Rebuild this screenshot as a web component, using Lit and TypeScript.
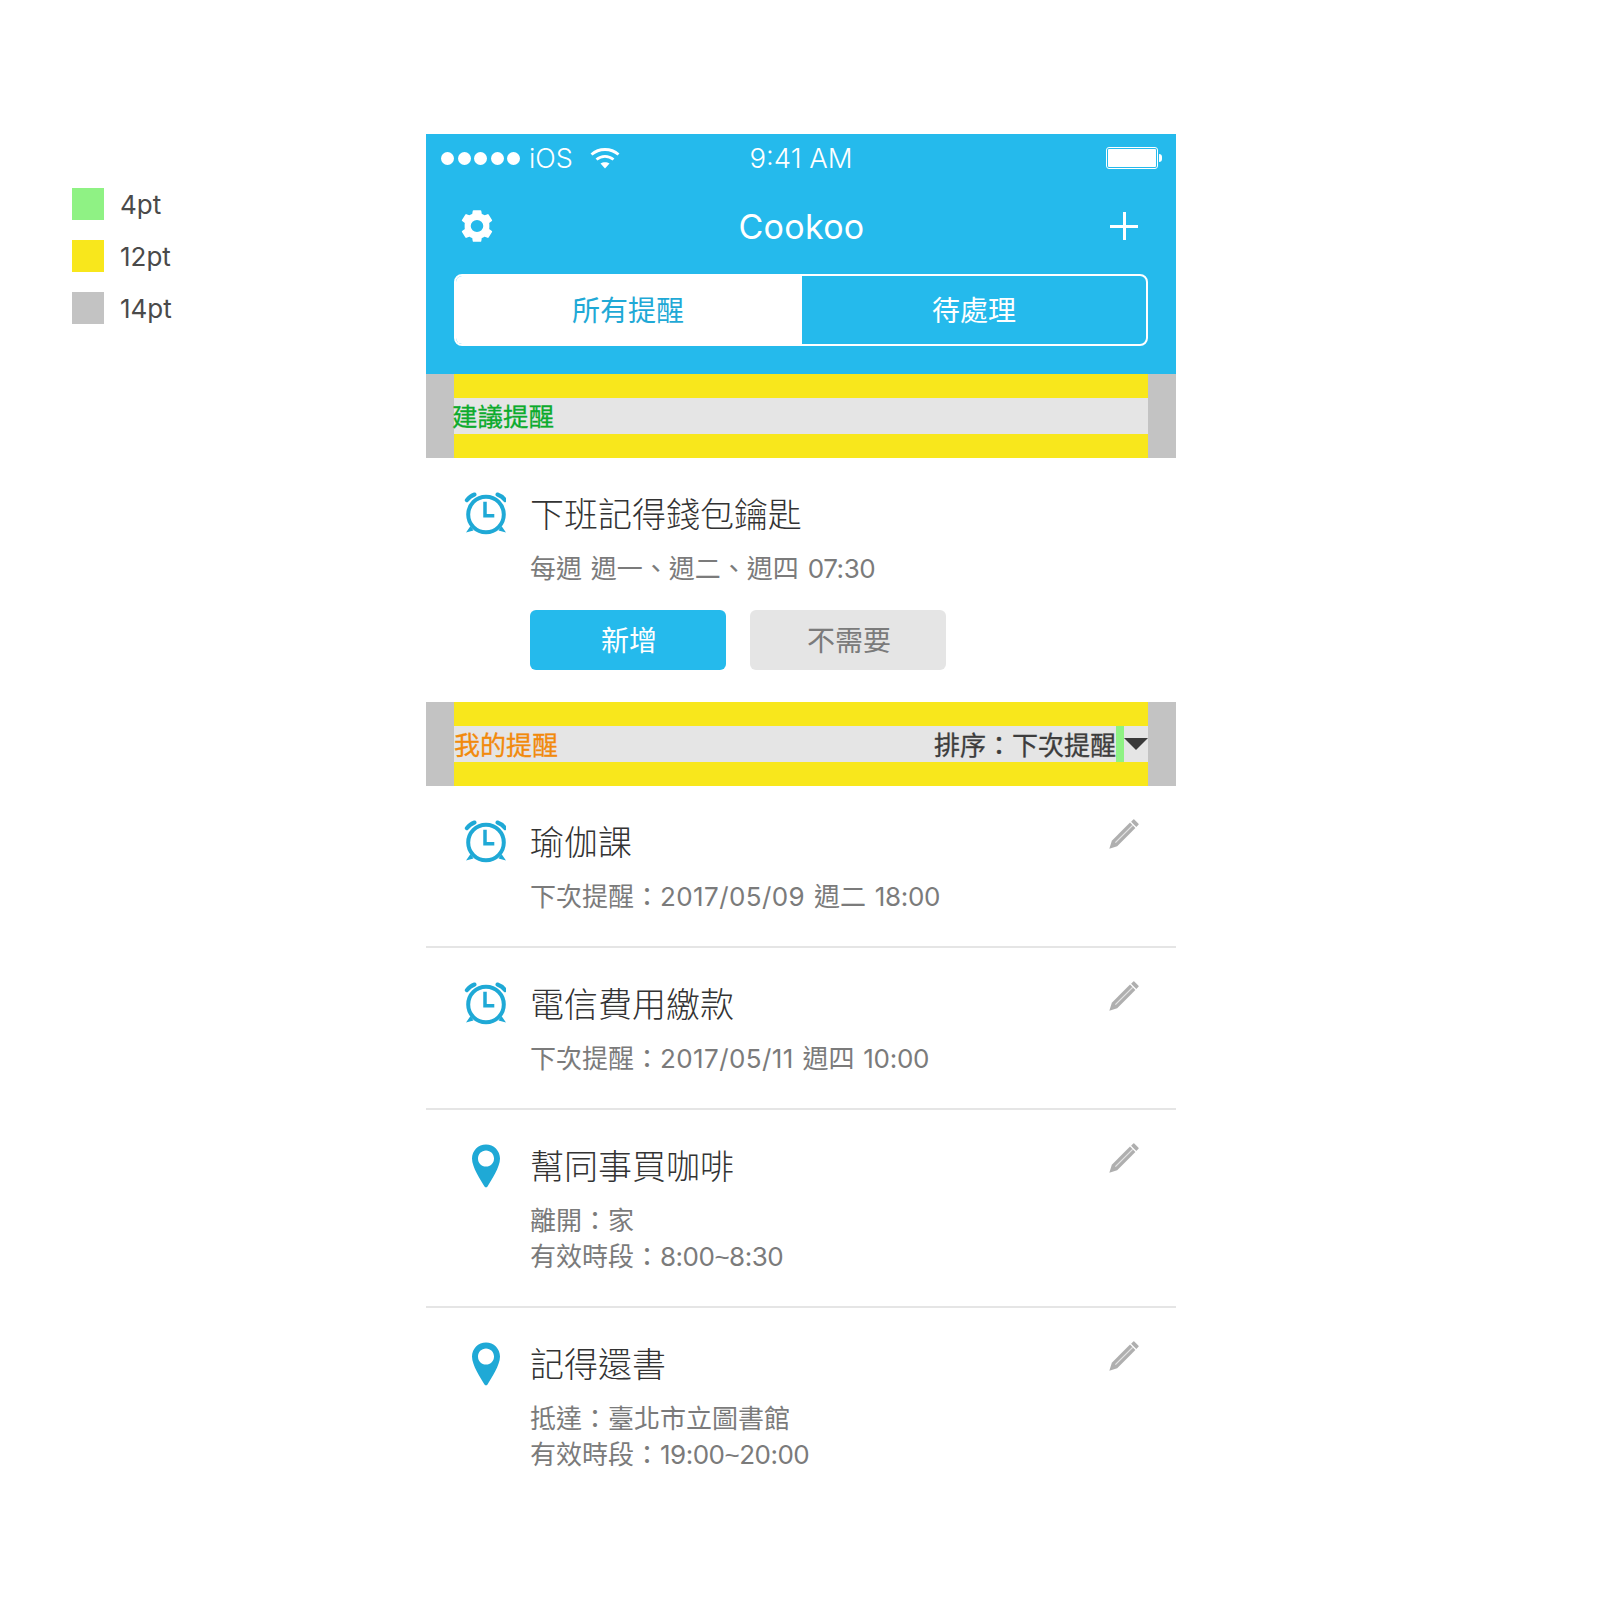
import { LitElement, html, css } from "lit";
import { customElement } from "lit/decorators.js";

const COLON = "\uFF1A";

const clock = html`<svg class="ic" viewBox="-2 0 44 44" width="44" height="44" fill="none" stroke="#1fa9d6">
  <circle cx="22" cy="22.500" r="17.800" stroke-width="4"/>
  <path d="M21 9.700V23.700H30.300" stroke-width="3.500"/>
  <path d="M2.800 8.200Q6 4 10.500 2.500" stroke-width="4" stroke-linecap="round"/>
  <path d="M41.200 8.200Q38 4 33.500 2.500" stroke-width="4" stroke-linecap="round"/>
  <path d="M2 40.500L6.500 34L9.500 38.500ZM42 40.500L37.500 34L34.500 38.500Z" fill="#1fa9d6" stroke="none"/>
</svg>`;

const pin = html`<svg class="ic" viewBox="-2 0 44 44" width="44" height="44">
  <path fill="#1fa9d6" fill-rule="evenodd" d="M22 0.500C14.200 0.500 8 6.700 8 14.500C8 23 16.500 36 20.500 42.400C21.300 43.600 22.700 43.600 23.500 42.400C27.500 36 36 23 36 14.500C36 6.700 29.800 0.500 22 0.500ZM22 6.400C26.600 6.400 30 10 30 14.500C30 19 26.600 22.600 22 22.600C17.400 22.600 14 19 14 14.500C14 10 17.400 6.400 22 6.400Z"/>
</svg>`;

const pencil = html`<svg class="pen" viewBox="0 0 30 30" width="30" height="30">
  <path fill="#afafaf" d="M25.300 0.500L29.500 4.700Q30 5.200 29.500 5.700L27.300 7.900L22.100 2.700L24.300 0.500Q24.800 0 25.300 0.500Z"/>
  <path fill="#afafaf" d="M21 3.600L26.400 9L8.200 27.200L0.300 29.700L2.800 21.800Z"/>
  <path fill="#e4e4e4" d="M23.200 5.900L24.100 6.800L6.800 24.100L5.900 23.200Z"/>
</svg>`;

const gear = html`<svg class="gear" viewBox="1 0 30 32" preserveAspectRatio="none" width="32" height="32">
  <path fill="#fff" stroke="#fff" stroke-width="1.600" stroke-linejoin="round" fill-rule="evenodd" d="M12.800 1H19.200L19.800 4.600C20.900 5 21.900 5.500 22.800 6.200L26.200 4.900L29.400 10.300L26.600 12.700C26.800 13.700 26.800 14.800 26.800 16C26.800 17.200 26.800 18.300 26.600 19.300L29.400 21.700L26.200 27.100L22.800 25.800C21.900 26.500 20.900 27 19.800 27.400L19.200 31H12.800L12.200 27.400C11.100 27 10.100 26.500 9.200 25.800L5.800 27.100L2.600 21.700L5.400 19.300C5.200 18.300 5.200 17.200 5.200 16C5.200 14.800 5.200 13.700 5.400 12.700L2.600 10.300L5.800 4.900L9.200 6.200C10.100 5.500 11.100 5 12.200 4.600ZM16 9.300A6.700 6.700 0 1 0 16 22.700A6.700 6.700 0 1 0 16 9.300Z"/>
</svg>`;

const wifi = html`<svg class="wifi" viewBox="0 0 30 22" width="30" height="22" fill="none" stroke="#fff" stroke-width="2.800">
  <path d="M1.500 7.500C9 0.800 21 0.800 28.500 7.500"/>
  <path d="M6.500 12.500C11.500 8.200 18.500 8.200 23.500 12.500"/>
  <path d="M15 21.500L10.500 16.500C13 14.800 17 14.800 19.500 16.500Z" fill="#fff" stroke="none"/>
</svg>`;

const dateLine = (d: string, wk: string, t: string) =>
  html`下次提醒${COLON}<span class="wide">${d}</span> ${wk} <span class="tight">${t}</span>`;
const rangeLine = (a: string, b: string) =>
  html`有效時段${COLON}<span class="tight2">${a}<span class="tl">~</span>${b}</span>`;

type Row = { icon: "clock" | "pin"; title: string; lines: unknown[] };
const rows: Row[] = [
  { icon: "clock", title: "瑜伽課", lines: [dateLine("2017/05/09", "週二", "18:00")] },
  { icon: "clock", title: "電信費用繳款", lines: [dateLine("2017/05/11", "週四", "10:00")] },
  { icon: "pin", title: "幫同事買咖啡", lines: [`離開${COLON}家`, rangeLine("8:00", "8:30")] },
  { icon: "pin", title: "記得還書", lines: [`抵達${COLON}臺北市立圖書館`, rangeLine("19:00", "20:00")] },
];

@customElement("app-root")
export class AppRoot extends LitElement {
  static styles = css`
    :host {
      display: block;
      width: 1600px;
      height: 1600px;
      background: #fff;
      font-family: "Inter", "Noto Sans CJK TC", sans-serif;
      color: #4a4a4a;
    }
    .page { display: flex; align-items: flex-start; padding: 134px 0 0 72px; }
    .legend { width: 354px; padding-top: 54px; display: flex; flex-direction: column; gap: 20px; flex: none; }
    .lg { display: flex; align-items: center; gap: 16px; font-size: 26px; line-height: 28px; height: 32px; color: #4a4a4a; }
    .lg span { padding-top: 2px; }
    .sw { width: 32px; height: 32px; }
    .green { background: #8ff284; }
    .yellow { background: #f8e71c; }
    .gray { background: #c3c3c3; }
    .phone { width: 750px; flex: none; }
    .head { background: #25baec; height: 240px; display: flex; flex-direction: column; color: #fff; }
    .status { height: 48px; display: grid; grid-template-columns: 1fr auto 1fr; align-items: center; padding: 0 13px 0 15px; font-size: 27px; font-weight: 300; }
    .st-l { display: flex; align-items: center; }
    .st-r { display: flex; justify-content: flex-end; }
    .dots { display: flex; gap: 3.500px; margin-right: 9px; }
    .dot { width: 13px; height: 13px; border-radius: 50%; background: #fff; }
    .ios { margin-right: 17px; }
    .wifi { display: block; }
    .time { font-size: 27.500px; margin-right: 2px; }
    .batt { width: 52px; height: 22px; border: 1px solid #fff; border-radius: 3px; padding: 1px; box-sizing: border-box; position: relative; margin-right: 5px; }
    .batt i { display: block; height: 100%; background: #fff; border-radius: 1px; }
    .batt b { position: absolute; right: -5px; top: 6px; width: 3px; height: 8px; background: #fff; border-radius: 0 3px 3px 0; }
    .nav { height: 92px; padding: 0 36px 4px 36px; box-sizing: border-box; display: flex; align-items: center; justify-content: space-between; }
    .gear { display: block; margin-left: -1px; }
    .nav-t { font-size: 34px; letter-spacing: 0.300px; color: #fff; }
    .plus { width: 28px; height: 28px; position: relative; margin-right: 2px; }
    .plus::before { content: ""; position: absolute; left: 12.500px; top: 0; width: 3px; height: 28px; background: #fff; }
    .plus::after { content: ""; position: absolute; left: 0; top: 12.500px; width: 28px; height: 3px; background: #fff; }
    .seg { margin: 0 28px; height: 72px; display: flex; border: 2px solid #fff; border-radius: 8px; box-sizing: border-box; font-size: 28px; overflow: hidden; }
    .seg div { flex: 1; display: flex; align-items: center; justify-content: center; padding-bottom: 2px; }
    .seg .on { flex: none; width: 344px; padding-right: 2px; background: #fff; color: #1fa9d6; }
    .band { background: #c3c3c3; padding: 0 28px; }
    .band-in { background: #f8e71c; padding: 24px 0; }
    .band-row { background: #e5e5e5; height: 36px; display: flex; align-items: center; font-size: 26px; line-height: 36px; -webkit-text-stroke: 0.300px currentColor; }
    .band-row > span { padding-top: 2px; height: 34px; }
    .band-row > .c-g { color: #0cab2c; font-size: 25.500px; margin-left: -2px; flex: 1; padding-top: 1px; height: 35px; }
    .c-o { color: #f28a0c; flex: 1; }
    .sort { color: #3d3d3d; }
    .gap4 { width: 8px; height: 36px; background: #8ff284; }
    .tri { width: 0; height: 0; border-left: 12px solid transparent; border-right: 12px solid transparent; border-top: 12px solid #3a3a3a; }
    .card { padding: 34px 36px 32px 36px; display: flex; gap: 24px; position: relative; }
    .ic { display: block; flex: none; }
    .rows .card { border-bottom: 2px solid #e5e5e5; padding-bottom: 31px; }
    .rows .card:last-child { border-bottom: none; }
    .body { flex: 1; }
    .t { font-size: 34px; line-height: 46px; font-weight: 300; color: #333; }
    .s { font-size: 26px; line-height: 36px; color: #7b7b7b; word-spacing: 1.500px; }
    .t + .s { margin-top: 13px; }
    .wide { letter-spacing: 0.400px; }
    .tight { letter-spacing: -0.300px; }
    .tight2 { letter-spacing: -0.500px; }
    .tl { font-family: "Liberation Sans", sans-serif; }
    .t0 { letter-spacing: -0.400px; }
    .pen { position: absolute; right: 37px; top: 33px; display: block; }
    .btns { display: flex; gap: 24px; margin-top: 23px; }
    .btn { width: 196px; height: 60px; border-radius: 6px; display: flex; align-items: center; justify-content: center; font-size: 28px; padding: 0 0 2px 2px; box-sizing: border-box; }
    .b1 { background: #25baec; color: #fff; }
    .b2 { background: #e5e5e5; color: #7b7b7b; }
  `;

  render() {
    return html`<div class="page">
      <div class="legend">
        <div class="lg"><div class="sw green"></div><span>4pt</span></div>
        <div class="lg"><div class="sw yellow"></div><span>12pt</span></div>
        <div class="lg"><div class="sw gray"></div><span>14pt</span></div>
      </div>
      <div class="phone">
        <div class="head">
          <div class="status">
            <div class="st-l">
              <div class="dots">${[0, 1, 2, 3, 4].map(() => html`<div class="dot"></div>`)}</div>
              <span class="ios">iOS</span>${wifi}
            </div>
            <span class="time">9:41 AM</span>
            <div class="st-r"><div class="batt"><i></i><b></b></div></div>
          </div>
          <div class="nav">${gear}<span class="nav-t">Cookoo</span><div class="plus"></div></div>
          <div class="seg"><div class="on">所有提醒</div><div>待處理</div></div>
        </div>
        <div class="band"><div class="band-in"><div class="band-row"><span class="c-g">建議提醒</span></div></div></div>
        <div class="card">
          ${clock}
          <div class="body">
            <div class="t">下班記得錢包鑰匙</div>
            <div class="s">每週 週一、週二、週四 <span class="t0">07:30</span></div>
            <div class="btns"><div class="btn b1">新增</div><div class="btn b2">不需要</div></div>
          </div>
        </div>
        <div class="band"><div class="band-in"><div class="band-row"><span class="c-o">我的提醒</span><span class="sort">${`排序${COLON}下次提醒`}</span><div class="gap4"></div><div class="tri"></div></div></div></div>
        <div class="rows">
          ${rows.map(
            (r) => html`<div class="card">
              ${r.icon === "clock" ? clock : pin}
              <div class="body">
                <div class="t">${r.title}</div>
                ${r.lines.map((l) => html`<div class="s">${l}</div>`)}
              </div>
              ${pencil}
            </div>`
          )}
        </div>
      </div>
    </div>`;
  }
}
